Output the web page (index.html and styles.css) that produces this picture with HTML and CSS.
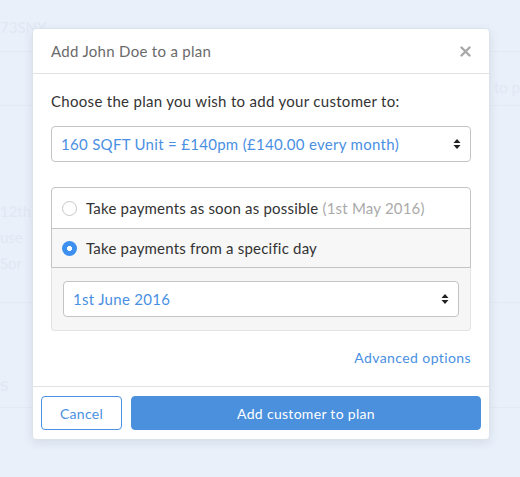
FILE: index.html
```html
<!DOCTYPE html>
<html>
<head>
<meta charset="utf-8">
<link rel="stylesheet" href="styles.css">
</head>
<body>
<div class="page">
  <div class="bg-row bg-r1"><span class="bg-text">73SNY</span></div>
  <div class="bg-row bg-r2"><span class="bg-text right">d to p</span></div>
  <div class="bg-list">
    <div class="bg-text">12th</div>
    <div class="bg-text">use</div>
    <div class="bg-text">Sor</div>
  </div>
  <div class="bg-row bg-r3"><span class="bg-text big">s</span></div>
</div>

<div class="modal">
  <div class="modal-header">
    <span class="modal-title">Add John Doe to a plan</span>
    <svg class="close" width="11" height="11" viewBox="0 0 11 11"><path d="M1.5 1.5 L9.5 9.5 M9.5 1.5 L1.5 9.5" stroke="#a8a8a8" stroke-width="2.4" stroke-linecap="round"/></svg>
  </div>
  <div class="modal-body">
    <p class="lead">Choose the plan you wish to add your customer to:</p>
    <div class="select">
      <span>160 SQFT Unit = £140pm (£140.00 every month)</span>
      <svg class="arrows" width="8" height="12" viewBox="0 0 8 12"><path d="M4 1 L7.5 5 H0.5 Z M4 11 L7.5 7 H0.5 Z" fill="#222"/></svg>
    </div>
    <div class="radio-group">
      <div class="radio-row">
        <span class="radio"></span>
        <span>Take payments as soon as possible <span class="muted">(1st May 2016)</span></span>
      </div>
      <div class="radio-row active">
        <span class="radio checked"></span>
        <span>Take payments from a specific day</span>
      </div>
    </div>
    <div class="date-panel">
      <div class="select">
        <span>1st June 2016</span>
        <svg class="arrows" width="8" height="12" viewBox="0 0 8 12"><path d="M4 1 L7.5 5 H0.5 Z M4 11 L7.5 7 H0.5 Z" fill="#222"/></svg>
      </div>
    </div>
    <div class="advanced"><a class="link">Advanced options</a></div>
  </div>
  <div class="modal-footer">
    <button class="btn btn-cancel">Cancel</button>
    <button class="btn btn-primary">Add customer to plan</button>
  </div>
</div>
</body>
</html>
```

FILE: styles.css
```css
* { box-sizing: border-box; }
html, body { margin: 0; padding: 0; }
body {
  width: 520px;
  height: 477px;
  overflow: hidden;
  background: #e9f0fa;
  font-family: Lato, "Open Sans", sans-serif;
  position: relative;
}
.page { position: relative; height: 477px; }
.bg-row { border-bottom: 1px solid #e3eaf5; }
.bg-r1 { height: 52px; padding: 17px 0 0 0; }
.bg-r2 { height: 54px; padding: 26px 0 0 0; display: flex; justify-content: flex-end; }
.bg-text { color: #e0e8f4; font-size: 15px; }
.bg-list { padding: 96px 0 0 0; display: flex; flex-direction: column; gap: 8px; height: 197px; border-bottom: 1px solid #e3eaf5; }
.bg-r3 { height: 105px; padding: 68px 0 0 0; }
.big { font-size: 20px; }

.modal {
  position: absolute;
  left: 32px;
  top: 28px;
  width: 458px;
  height: 412px;
  background: #fff;
  border: 1px solid #dde3ea;
  border-radius: 4px;
  box-shadow: 0 3px 10px rgba(60, 80, 110, 0.12);
  display: flex;
  flex-direction: column;
}
.modal-header {
  height: 45px;
  border-bottom: 1px solid #e2e2e2;
  display: flex;
  align-items: center;
  justify-content: space-between;
  padding: 0 18px 0 18px;
}
.modal-title { color: #6a6a6a; font-size: 15px; letter-spacing: 0.3px; }
.close { display: block; }
.modal-body { padding: 17px 18px 0 18px; flex: 1; }
.lead { margin: 0; font-size: 15px; line-height: 20px; color: #333; letter-spacing: 0.3px; }
.select {
  margin-top: 15px;
  height: 36px;
  border: 1px solid #c4c4c4;
  border-radius: 4px;
  background: #fff;
  display: flex;
  align-items: center;
  justify-content: space-between;
  padding: 0 9px 0 9px;
  color: #4a90e2;
  font-size: 15px;
  letter-spacing: 0.3px;
}
.arrows { display: block; }
.radio-group {
  margin-top: 25px;
  border: 1px solid #c4c4c4;
  border-radius: 4px 4px 0 0;
  overflow: hidden;
}
.radio-row {
  height: 40px;
  display: flex;
  align-items: center;
  gap: 9px;
  padding-left: 10px;
  font-size: 15px;
  color: #333;
  letter-spacing: 0.2px;
}
.radio-row + .radio-row { border-top: 1px solid #c4c4c4; }
.radio-row.active { background: #f7f7f7; height: 39px; }
.muted { color: #aaa; }
.radio {
  width: 15px;
  height: 15px;
  border-radius: 50%;
  border: 1px solid #c8c8c8;
  background: #fff;
  flex: none;
}
.radio.checked {
  border: none;
  background: radial-gradient(circle, #fff 0 2.2px, #3d8ff0 2.8px);
}
.date-panel {
  background: #f6f6f6;
  border: 1px solid #e3e3e3;
  border-top: none;
  border-radius: 0 0 4px 4px;
  padding: 13px 11px 13px 11px;
}
.date-panel .select { margin-top: 0; }
.advanced { display: flex; justify-content: flex-end; margin-top: 18px; }
.link { color: #4a90e2; font-size: 14px; letter-spacing: 0.4px; }
.modal-footer {
  border-top: 1px solid #e2e2e2;
  padding: 9px 8px 9px 8px;
  display: flex;
  gap: 9px;
}
.btn {
  height: 34px;
  border-radius: 4px;
  font-family: inherit;
  font-size: 14px;
  letter-spacing: 0.3px;
  cursor: pointer;
}
.btn-cancel {
  width: 81px;
  background: #fff;
  border: 1px solid #4a90e2;
  color: #4a90e2;
}
.btn-primary {
  flex: 1;
  background: #4a90dd;
  border: 1px solid #4a90dd;
  color: #fff;
}
```
